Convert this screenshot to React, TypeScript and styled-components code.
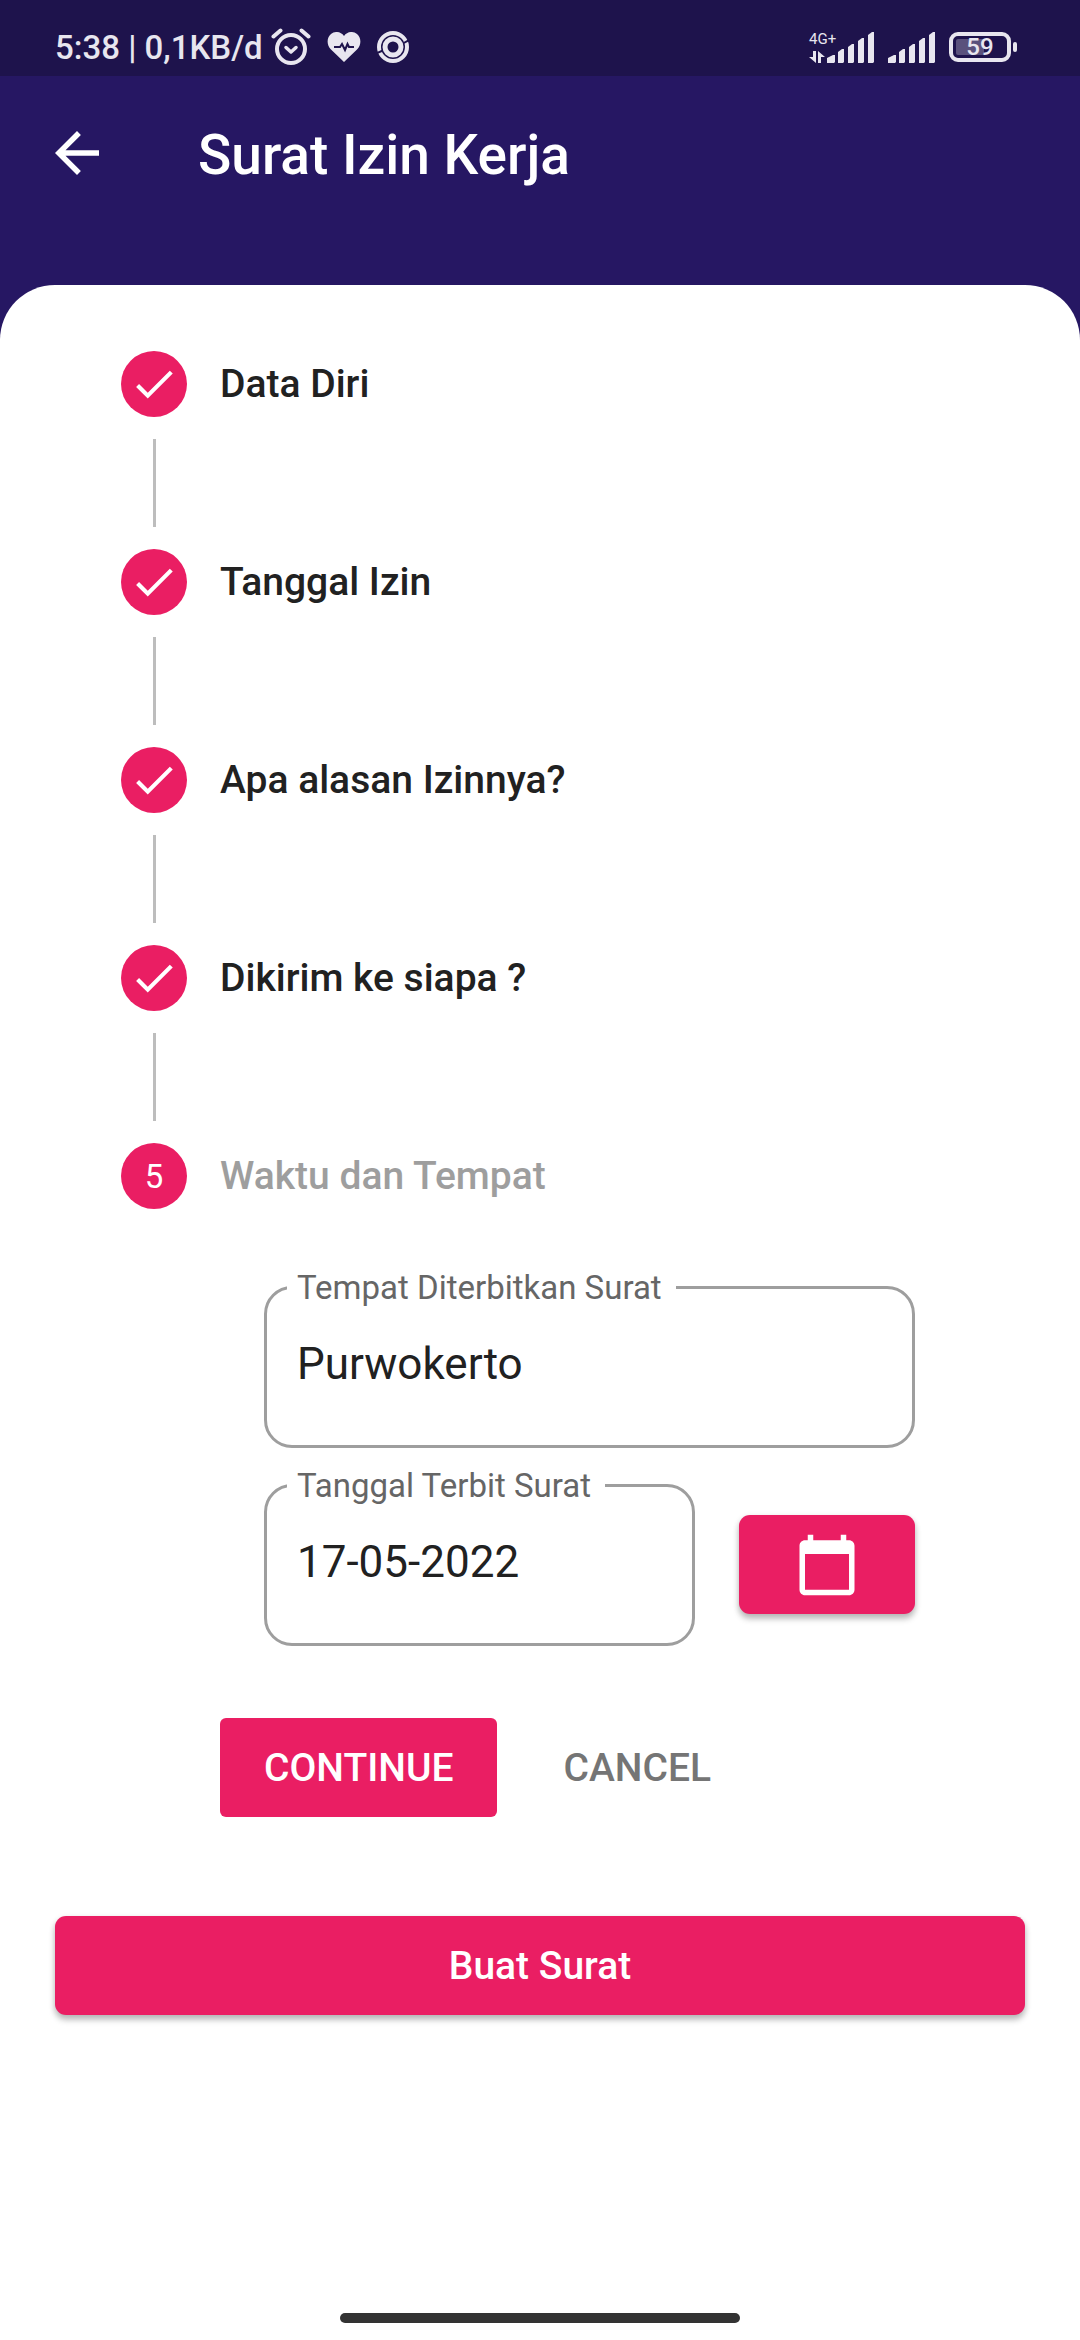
import React, { useState } from "react";
import styled, { createGlobalStyle } from "styled-components";
import { MdArrowBack, MdCalendarToday, MdCheck } from "react-icons/md";

const color = {
  status: "#1e134c",
  header: "#261763",
  accent: "#ea1e63",
  text: "#212121",
  label: "#666666",
  muted: "#9e9e9e",
  cancel: "#757575",
  line: "#bdbdbd",
  statusInk: "#e8e6ef",
};

const GlobalStyle = createGlobalStyle`
  *, *::before, *::after { box-sizing: border-box; }
  body { margin: 0; font-family: Roboto, "Noto Sans", sans-serif; color: ${color.text}; }
  button, input { font-family: inherit; margin: 0; border: 0; }
  button { cursor: pointer; }
  svg { display: block; }
`;

const Screen = styled.div`
  min-height: 100vh;
  display: flex;
  flex-direction: column;
  background: ${color.header};
`;

const StatusBar = styled.div`
  display: flex;
  align-items: center;
  justify-content: space-between;
  height: 76px;
  padding: 18px 63px 0 55px;
  background: ${color.status};
  color: ${color.statusInk};
`;

const StatusGroup = styled.div<{ $gap: number }>`
  display: flex;
  align-items: center;
  gap: ${(p) => p.$gap}px;
`;

const StatusText = styled.span`
  padding-top: 2px;
  font-size: 33px;
  line-height: 40px;
  font-weight: 500;
  margin-right: -8px;
`;

const Network = styled.div`
  display: flex;
  align-items: flex-end;
  gap: 2px;
`;

const NetworkType = styled.div`
  display: flex;
  flex-direction: column;
  gap: 4px;
  font-size: 15px;
  line-height: 16px;
  width: 16px;
  white-space: nowrap;
`;

const Battery = styled.div`
  display: flex;
  align-items: center;
  gap: 2px;

  &::after {
    content: "";
    width: 4px;
    height: 10px;
    border-radius: 2px;
    background: ${color.statusInk};
  }
`;

const BatteryCell = styled.div<{ $level: number }>`
  display: grid;
  place-items: center;
  width: 62px;
  height: 30px;
  padding: 3px;
  border: 4px solid ${color.statusInk};
  border-radius: 9px;
  font-size: 24px;
  line-height: 16px;
  font-weight: 500;
  background: linear-gradient(to right, #5a517c ${(p) => p.$level}%, transparent 0) content-box;
`;

const AppBar = styled.header`
  display: flex;
  align-items: center;
  gap: 88px;
  height: 154px;
  padding: 0 44px;
  margin-bottom: 55px;
  color: #fff;
`;

const BackButton = styled.button`
  padding: 0;
  background: none;
  color: inherit;
`;

const Title = styled.h1`
  margin: 0;
  padding-top: 4px;
  font-size: 55px;
  line-height: 66px;
  font-weight: 500;
`;

const Panel = styled.main`
  flex: 1;
  display: flex;
  flex-direction: column;
  padding: 66px 55px 17px;
  border-radius: 55px 55px 0 0;
  background: #fff;
`;

const Stepper = styled.ol`
  list-style: none;
  margin: 0;
  padding: 0 110px 0 66px;
`;

const StepHeader = styled.div`
  display: flex;
  align-items: center;
  gap: 33px;
`;

const StepBadge = styled.span`
  display: grid;
  place-items: center;
  width: 66px;
  height: 66px;
  border-radius: 50%;
  background: ${color.accent};
  color: #fff;
  font-size: 33px;
`;

const StepTitle = styled.span<{ $muted?: boolean }>`
  font-size: 39px;
  line-height: 46px;
  font-weight: 500;
  color: ${(p) => (p.$muted ? color.muted : color.text)};
`;

const Connector = styled.div`
  width: 3px;
  height: 88px;
  margin: 22px 32px;
  background: ${color.line};
`;

const StepBody = styled.form`
  padding: 59px 0 0 99px;
`;

const Fields = styled.div`
  display: grid;
  gap: 18px;
  padding-left: 44px;
`;

const DateRow = styled.div`
  display: grid;
  grid-template-columns: 1fr 176px;
  align-items: end;
  gap: 44px;
`;

const Outline = styled.fieldset`
  min-width: 0;
  margin: 0;
  padding: 31px 20px 55px;
  border: 3px solid ${color.muted};
  border-radius: 28px;
`;

const Legend = styled.legend`
  padding: 0 14px 0 10px;
  font-size: 33px;
  line-height: 39px;
  color: ${color.label};
`;

const TextInput = styled.input`
  display: block;
  width: 100%;
  height: 52px;
  padding: 0 10px;
  background: none;
  outline: none;
  font-size: 44px;
  line-height: 52px;
  color: ${color.text};
`;

const RaisedButton = styled.button`
  display: grid;
  place-items: center;
  height: 99px;
  border-radius: 11px;
  background: ${color.accent};
  color: #fff;
  font-size: 39px;
  font-weight: 500;
  box-shadow: 0 5px 6px rgba(0, 0, 0, 0.22), 0 2px 6px rgba(0, 0, 0, 0.12);
`;

const DateButton = styled(RaisedButton)`
  margin-bottom: 32px;
`;

const SubmitButton = styled(RaisedButton)`
  margin-top: 99px;
`;

const Actions = styled.div`
  display: flex;
  gap: 22px;
  margin-top: 72px;
`;

const FlatButton = styled.button<{ $filled?: boolean }>`
  height: 99px;
  padding: 0 44px;
  border-radius: 6px;
  font-size: 39px;
  font-weight: 500;
  background: ${(p) => (p.$filled ? color.accent : "none")};
  color: ${(p) => (p.$filled ? "#fff" : color.cancel)};
`;

const HomeIndicator = styled.div`
  align-self: center;
  width: 400px;
  max-width: 60%;
  height: 10px;
  margin-top: auto;
  border-radius: 5px;
  background: #333;
`;

const AlarmIcon = () => (
  <svg width="40" height="38" viewBox="0 0 40 38" fill="none" stroke="currentColor" strokeLinecap="round" aria-hidden>
    <circle cx="20" cy="21" r="14" strokeWidth="4" />
    <path d="M2.500 8.500L9.500 2.500M37.500 8.500L30.500 2.500" strokeWidth="4" />
    <path d="M15 19.500l5 4.500 5-4.500" strokeWidth="3.500" strokeLinejoin="round" />
  </svg>
);

const HeartIcon = () => (
  <svg width="34" height="30" viewBox="0 0 34 30" aria-hidden>
    <path
      d="M17 30L4 17.500C-1 12.500 0 5 4 2c4-3.300 10-2.500 13 2 3-4.500 9-5.300 13-2 4 3 5 10.500 0 15.500z"
      fill="currentColor"
    />
    <path d="M7 15h6l2-3 3 6 2.500-6 1.500 3h5" fill="none" stroke={color.status} strokeWidth="2" />
  </svg>
);

const RingIcon = () => (
  <svg width="32" height="32" viewBox="0 0 32 32" fill="none" aria-hidden>
    <circle cx="16" cy="16" r="14" stroke="currentColor" strokeWidth="4" />
    <path d="M0 22l7-3M32 9l-7 4" stroke={color.status} strokeWidth="2" />
    <circle cx="16" cy="16" r="8" stroke="currentColor" strokeWidth="5" />
  </svg>
);

const DataArrows = () => (
  <svg width="16" height="12" viewBox="0 0 16 12" fill="currentColor" aria-hidden>
    <path d="M4 0h3v12L0 6h4zM9 12h3V6h4L9 0z" />
  </svg>
);

const SignalIcon = () => (
  <svg width="48" height="31" viewBox="0 0 48 31" fill="currentColor" aria-hidden>
    {[8, 14, 19, 25, 31].map((h, i) => {
      const x = i * 10 + (i === 0 ? 0 : 1);
      const w = i === 0 ? 8 : 6;
      return <path key={h} d={`M${x} ${34 - h}l${w - 2}-3h2v${h - 1}l-1 1h-${w - 1}z`} />;
    })}
  </svg>
);

type FieldProps = { id: string; label: string; value: string; onChange: (value: string) => void };

const Field = ({ id, label, value, onChange }: FieldProps) => (
  <Outline>
    <Legend>
      <label htmlFor={id}>{label}</label>
    </Legend>
    <TextInput id={id} type="text" value={value} onChange={(e) => onChange(e.target.value)} />
  </Outline>
);

const doneSteps = ["Data Diri", "Tanggal Izin", "Apa alasan Izinnya?", "Dikirim ke siapa ?"];

export default function App() {
  const [place, setPlace] = useState("Purwokerto");
  const [date, setDate] = useState("17-05-2022");

  return (
    <Screen>
      <GlobalStyle />
      <StatusBar>
        <StatusGroup $gap={16}>
          <StatusText>5:38 | 0,1KB/d</StatusText>
          <AlarmIcon />
          <HeartIcon />
          <RingIcon />
        </StatusGroup>
        <StatusGroup $gap={13}>
          <Network>
            <NetworkType>
              4G+
              <DataArrows />
            </NetworkType>
            <SignalIcon />
          </Network>
          <SignalIcon />
          <Battery>
            <BatteryCell $level={59}>59</BatteryCell>
          </Battery>
        </StatusGroup>
      </StatusBar>

      <AppBar>
        <BackButton type="button" aria-label="Kembali">
          <MdArrowBack size={66} />
        </BackButton>
        <Title>Surat Izin Kerja</Title>
      </AppBar>

      <Panel>
        <Stepper>
          {doneSteps.map((title) => (
            <li key={title}>
              <StepHeader>
                <StepBadge>
                  <MdCheck size={50} />
                </StepBadge>
                <StepTitle>{title}</StepTitle>
              </StepHeader>
              <Connector />
            </li>
          ))}
          <li>
            <StepHeader>
              <StepBadge>5</StepBadge>
              <StepTitle $muted>Waktu dan Tempat</StepTitle>
            </StepHeader>
            <StepBody onSubmit={(e) => e.preventDefault()}>
              <Fields>
                <Field id="place" label="Tempat Diterbitkan Surat" value={place} onChange={setPlace} />
                <DateRow>
                  <Field id="date" label="Tanggal Terbit Surat" value={date} onChange={setDate} />
                  <DateButton type="button" aria-label="Pilih tanggal">
                    <MdCalendarToday size={66} />
                  </DateButton>
                </DateRow>
              </Fields>
              <Actions>
                <FlatButton type="submit" $filled>
                  CONTINUE
                </FlatButton>
                <FlatButton type="button">CANCEL</FlatButton>
              </Actions>
            </StepBody>
          </li>
        </Stepper>
        <SubmitButton type="button">Buat Surat</SubmitButton>
        <HomeIndicator />
      </Panel>
    </Screen>
  );
}
